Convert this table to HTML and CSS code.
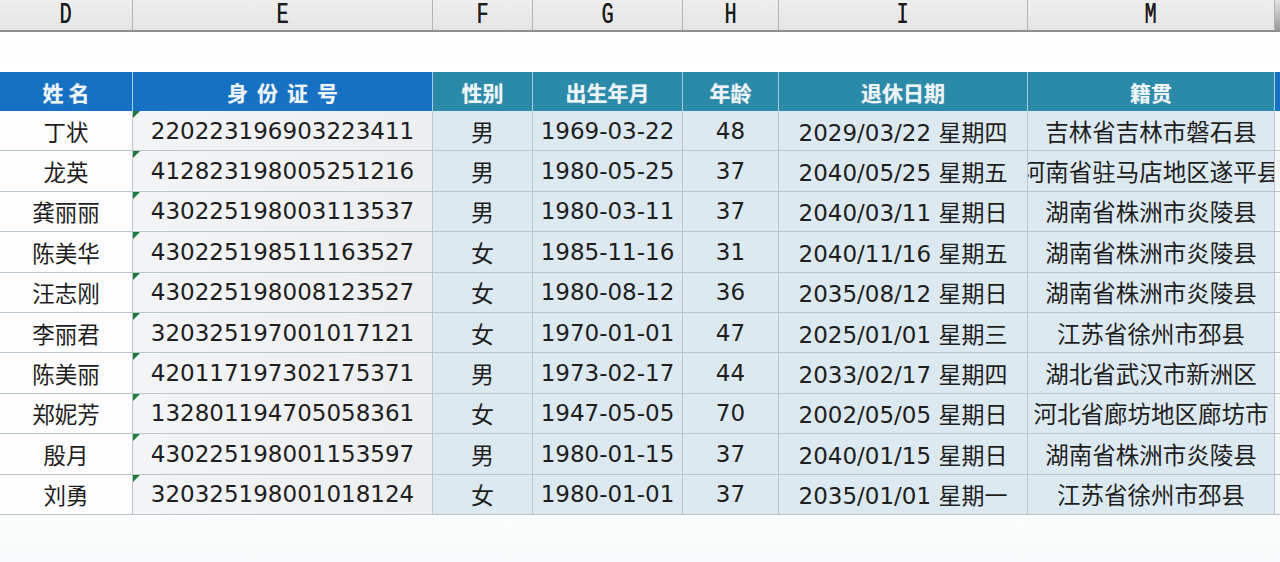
FILE: index.html
```html
<!DOCTYPE html>
<html lang="zh-CN">
<head>
<meta charset="utf-8">
<title>员工信息表</title>
<link rel="stylesheet" href="styles.css">
</head>
<body>
<div class="sheet">
  <div class="colbar">
    <div class="col-letter"><span>D</span></div>
    <div class="col-letter"><span>E</span></div>
    <div class="col-letter"><span>F</span></div>
    <div class="col-letter"><span>G</span></div>
    <div class="col-letter"><span>H</span></div>
    <div class="col-letter"><span>I</span></div>
    <div class="col-letter"><span>M</span></div>
    <div class="col-letter edge"></div>
  </div>
  <div class="spacer"></div>
  <div class="grid" role="table">
    <div class="hd blue" role="columnheader"><span class="sp-name">姓名</span></div>
    <div class="hd blue" role="columnheader"><span class="sp-id">身份证号</span></div>
    <div class="hd teal" role="columnheader">性别</div>
    <div class="hd teal" role="columnheader">出生年月</div>
    <div class="hd teal" role="columnheader">年龄</div>
    <div class="hd teal" role="columnheader">退休日期</div>
    <div class="hd teal" role="columnheader">籍贯</div>
    <div class="hd blue edge" role="columnheader"></div>

    <div class="c name">丁状</div><div class="c id">220223196903223411</div><div class="c info">男</div><div class="c info">1969-03-22</div><div class="c info">48</div><div class="c info">2029/03/22 星期四</div><div class="c info place">吉林省吉林市磐石县</div><div class="c edge"></div>
    <div class="c name">龙英</div><div class="c id">412823198005251216</div><div class="c info">男</div><div class="c info">1980-05-25</div><div class="c info">37</div><div class="c info">2040/05/25 星期五</div><div class="c info place">河南省驻马店地区遂平县</div><div class="c edge"></div>
    <div class="c name">龚丽丽</div><div class="c id">430225198003113537</div><div class="c info">男</div><div class="c info">1980-03-11</div><div class="c info">37</div><div class="c info">2040/03/11 星期日</div><div class="c info place">湖南省株洲市炎陵县</div><div class="c edge"></div>
    <div class="c name">陈美华</div><div class="c id">430225198511163527</div><div class="c info">女</div><div class="c info">1985-11-16</div><div class="c info">31</div><div class="c info">2040/11/16 星期五</div><div class="c info place">湖南省株洲市炎陵县</div><div class="c edge"></div>
    <div class="c name">汪志刚</div><div class="c id">430225198008123527</div><div class="c info">女</div><div class="c info">1980-08-12</div><div class="c info">36</div><div class="c info">2035/08/12 星期日</div><div class="c info place">湖南省株洲市炎陵县</div><div class="c edge"></div>
    <div class="c name">李丽君</div><div class="c id">320325197001017121</div><div class="c info">女</div><div class="c info">1970-01-01</div><div class="c info">47</div><div class="c info">2025/01/01 星期三</div><div class="c info place">江苏省徐州市邳县</div><div class="c edge"></div>
    <div class="c name">陈美丽</div><div class="c id">420117197302175371</div><div class="c info">男</div><div class="c info">1973-02-17</div><div class="c info">44</div><div class="c info">2033/02/17 星期四</div><div class="c info place">湖北省武汉市新洲区</div><div class="c edge"></div>
    <div class="c name">郑妮芳</div><div class="c id">132801194705058361</div><div class="c info">女</div><div class="c info">1947-05-05</div><div class="c info">70</div><div class="c info">2002/05/05 星期日</div><div class="c info place">河北省廊坊地区廊坊市</div><div class="c edge"></div>
    <div class="c name">殷月</div><div class="c id">430225198001153597</div><div class="c info">男</div><div class="c info">1980-01-15</div><div class="c info">37</div><div class="c info">2040/01/15 星期日</div><div class="c info place">湖南省株洲市炎陵县</div><div class="c edge"></div>
    <div class="c name">刘勇</div><div class="c id">320325198001018124</div><div class="c info">女</div><div class="c info">1980-01-01</div><div class="c info">37</div><div class="c info">2035/01/01 星期一</div><div class="c info place">江苏省徐州市邳县</div><div class="c edge"></div>
  </div>
  <div class="bottom"></div>
</div>
</body>
</html>
```
FILE: styles.css
```css
html, body {
  margin: 0;
  padding: 0;
  background: #ffffff;
}
body {
  width: 1280px;
  height: 562px;
  overflow: hidden;
  font-family: "DejaVu Sans", "Noto Sans CJK SC", sans-serif;
}
.sheet {
  display: flex;
  flex-direction: column;
  width: 1280px;
}
.colbar {
  display: grid;
  grid-template-columns: 133px 300px 100px 150px 96px 249px 247px 5px;
  height: 32px;
  box-sizing: border-box;
  background: linear-gradient(#eeeeee, #e5e5e5);
  border-bottom: 2px solid #8e8e8e;
}
.col-letter {
  display: flex;
  align-items: center;
  justify-content: center;
  border-right: 1px solid #b4b4b4;
  box-sizing: border-box;
  color: #1c1c1c;
  font-family: "Liberation Mono", monospace;
  font-size: 25px;
  line-height: 1;
}
.col-letter span {
  display: inline-block;
  transform: scaleX(0.8) scaleY(1.15);
  text-shadow: 0.4px 0 0 #1c1c1c;
}
.col-letter.edge {
  border-right: none;
  background: linear-gradient(#e4e4e4, #9a9a9a);
}
.spacer {
  height: 40px;
  background: linear-gradient(#fcfdfd, #ffffff);
}
.grid {
  display: grid;
  grid-template-columns: 133px 300px 100px 150px 96px 249px 247px 5px;
  grid-template-rows: 39px repeat(10, 40.4px);
}
.hd {
  display: flex;
  align-items: center;
  justify-content: center;
  color: #eef5f9;
  font-family: "Noto Sans CJK SC", sans-serif;
  font-weight: 700;
  font-size: 21px;
  border-right: 1px solid #a6d0e2;
  box-sizing: border-box;
  text-shadow: 0 0 1px rgba(255,255,255,0.5);
}
.hd.blue { background: #1671c3; }
.hd.teal { background: #2c8aa9; }
.hd.edge { border-right: none; }
.sp-name { letter-spacing: 5px; padding-left: 5px; }
.sp-id { letter-spacing: 9px; padding-left: 9px; }
.c {
  position: relative;
  display: flex;
  align-items: center;
  justify-content: center;
  overflow: hidden;
  white-space: nowrap;
  box-sizing: border-box;
  border-right: 1px solid #b9c5cc;
  border-bottom: 1px solid #b9c5cc;
  color: #1e1e1e;
  font-size: 23px;
}
.c.name {
  background: #fdfdfd;
  font-family: "Noto Sans CJK SC", sans-serif;
  font-size: 22.5px;
}
.c.id {
  background: linear-gradient(90deg, #f3f4f5, #eceeef);
}
.c.id::before {
  content: "";
  position: absolute;
  top: 0;
  left: 0;
  border-top: 7px solid #207a38;
  border-right: 7px solid transparent;
}
.c.info {
  background: #dce9f0;
}
.c.place {
  font-size: 23.5px;
}
.c.edge {
  background: #f4f6f7;
  border-right: none;
}
.bottom {
  height: 47px;
  background: linear-gradient(#fbfcfc, #f7f8f9);
}
```
